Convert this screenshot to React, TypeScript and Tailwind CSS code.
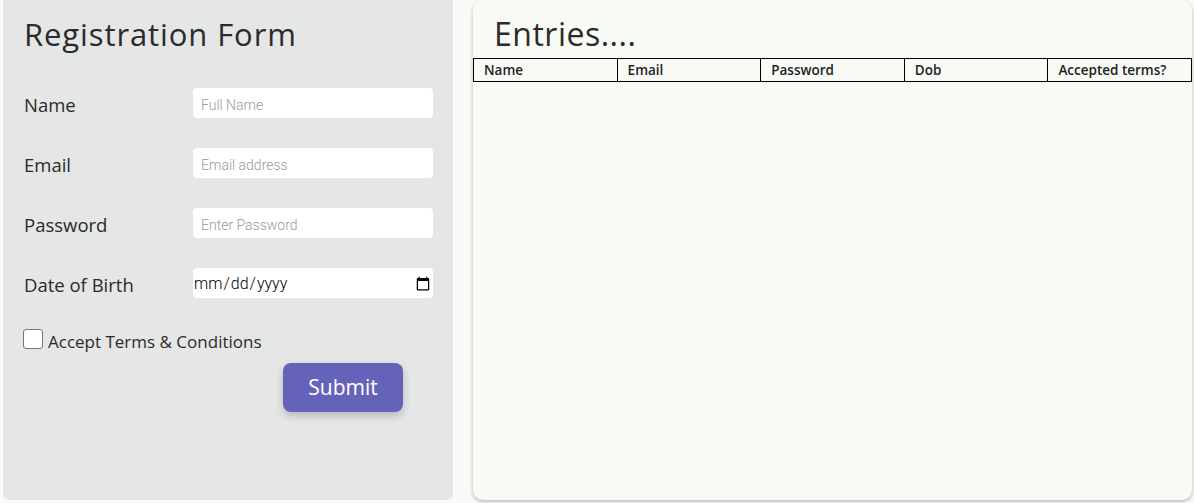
import React from "react";

export default function App() {
  const fields = [
    { label: "Name", placeholder: "Full Name", type: "text" },
    { label: "Email", placeholder: "Email address", type: "email" },
    { label: "Password", placeholder: "Enter Password", type: "password" },
  ];
  const cols = ["Name", "Email", "Password", "Dob", "Accepted terms?"];
  return (
    <div className="w-[1194px] h-[503px] bg-[#fcf9f9] flex gap-5 pl-[3px] pr-[2px] pb-[3px] text-[#333]" style={{ fontFamily: '"Open Sans", sans-serif' }}>
      <div className="w-[450px] h-[500px] bg-[#e5e6e6] rounded-b-[6px] pl-[21px] pr-[20px] pt-[12px] flex flex-col">
        <h1 className="text-[31px] leading-[44px] tracking-[0.9px] text-[#2b2b2b]">Registration Form</h1>
        <div className="mt-[32px] flex flex-col gap-[30px]">
          {fields.map((f) => (
            <div key={f.label} className="flex items-center h-[30px]">
              <label className="w-[169px] text-[18.5px] leading-[30px] pt-[3px] text-[#2b2b2b]">{f.label}</label>
              <input
                type={f.type}
                placeholder={f.placeholder}
                className="w-[240px] h-[30px] bg-white rounded-[4px] px-[8px] pt-[3px] text-[14px] outline-none placeholder:text-[#9a9a9a] placeholder:font-light"
                style={{ fontFamily: "Roboto, sans-serif" }}
              />
            </div>
          ))}
          <div className="flex items-center h-[30px]">
            <label className="w-[169px] text-[18.5px] leading-[30px] pt-[3px] text-[#2b2b2b]">Date of Birth</label>
            <input
              type="date"
              className="w-[240px] h-[30px] bg-white rounded-[4px] px-0 pt-[2px] text-[16px] font-light text-black outline-none"
              style={{ fontFamily: "Roboto, sans-serif" }}
            />
          </div>
        </div>
        <div className="mt-[27px] flex items-start">
          <input type="checkbox" className="w-[20px] h-[20px] m-0 mt-[4px] -ml-[1px] appearance-none bg-white border border-[#767676] rounded-[3px]" />
          <label className="ml-[5px] text-[17px] leading-[24px] pt-[5px] text-[#2b2b2b]">Accept Terms &amp; Conditions</label>
        </div>
        <div className="mt-[9px] pl-[259px]">
          <button className="w-[120px] h-[49px] bg-[#6563b9] rounded-[8px] text-white text-[21px] shadow-[0_4px_8px_rgba(0,0,0,0.2)]">Submit</button>
        </div>
      </div>
      <div className="w-[719px] h-[500px] bg-[#f8fbf5] rounded-[10px] shadow-[0_2px_4px_rgba(0,0,0,0.25)] flex flex-col pt-[12px]">
        <h2 className="pl-[21px] text-[32px] leading-[44px] tracking-[0.5px] text-[#2b2b2b]">Entries....</h2>
        <table className="mt-[2px] w-full border-collapse table-fixed">
          <thead>
            <tr>
              {cols.map((c) => (
                <th key={c} className="border border-black text-left font-semibold text-[13.5px] leading-[22px] pl-[10px] text-[#222]">{c}</th>
              ))}
            </tr>
          </thead>
        </table>
      </div>
    </div>
  );
}
